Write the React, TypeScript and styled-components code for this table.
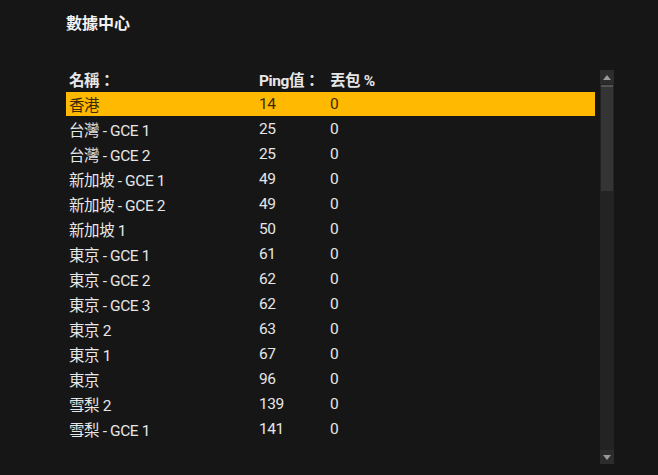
import React from "react";
import styled, { createGlobalStyle } from "styled-components";

const GlobalStyle = createGlobalStyle`
  html, body {
    margin: 0;
    padding: 0;
    background: #161616;
  }
  body {
    font-family: Roboto, "Noto Sans CJK TC", sans-serif;
    color: #e8e8e8;
  }
`;

const Page = styled.div`
  width: 658px;
  height: 475px;
  background: #161616;
  box-sizing: border-box;
  padding: 13px 0 0 66px;
  overflow: hidden;
`;

const Title = styled.h1`
  margin: 0;
  font-size: 16px;
  font-weight: 700;
  line-height: 22px;
  color: #f2f2f2;
`;

const Body = styled.div`
  display: flex;
  margin-top: 33px;
  gap: 5px;
`;

const Table = styled.div`
  width: 529px;
  display: flex;
  flex-direction: column;
`;

const Row = styled.div<{ $active?: boolean; $head?: boolean }>`
  display: grid;
  grid-template-columns: 190px 71px 1fr;
  align-items: center;
  height: ${(p) => (p.$head ? "20px" : "24px")};
  margin-bottom: ${(p) => (p.$head ? "4px" : "1px")};
  padding-left: 3px;
  font-size: 15.5px;
  letter-spacing: -0.4px;
  font-weight: ${(p) => (p.$head ? 700 : 400)};
  background: ${(p) => (p.$active ? "#ffb900" : "transparent")};
  color: ${(p) => (p.$active ? "#3b2c05" : "#e6e6e6")};
`;

const Scrollbar = styled.div`
  width: 14px;
  height: 394px;
  background: #232323;
  display: flex;
  flex-direction: column;
  margin-top: 2px;
`;

const Arrow = styled.div`
  height: 14px;
  background: #2c2c2c;
  display: flex;
  align-items: center;
  justify-content: center;
`;

const Thumb = styled.div`
  height: 104px;
  margin: 1px 1px 0;
  background: #343434;
  border-top: 2px solid #555;
`;

const Spacer = styled.div`
  flex: 1;
`;

const rows = [
  ["香港", "14", "0"],
  ["台灣 - GCE 1", "25", "0"],
  ["台灣 - GCE 2", "25", "0"],
  ["新加坡 - GCE 1", "49", "0"],
  ["新加坡 - GCE 2", "49", "0"],
  ["新加坡 1", "50", "0"],
  ["東京 - GCE 1", "61", "0"],
  ["東京 - GCE 2", "62", "0"],
  ["東京 - GCE 3", "62", "0"],
  ["東京 2", "63", "0"],
  ["東京 1", "67", "0"],
  ["東京", "96", "0"],
  ["雪梨 2", "139", "0"],
  ["雪梨 - GCE 1", "141", "0"],
];

const Tri = ({ up }: { up?: boolean }) => (
  <svg width="8" height="5" viewBox="0 0 8 5">
    <path d={up ? "M0 5 L4 0 L8 5 Z" : "M0 0 L4 5 L8 0 Z"} fill="#9a9a9a" />
  </svg>
);

export default function App() {
  return (
    <Page>
      <GlobalStyle />
      <Title>數據中心</Title>
      <Body>
        <Table>
          <Row $head>
            <span>名稱：</span>
            <span>Ping值：</span>
            <span>丟包 %</span>
          </Row>
          {rows.map((r, i) => (
            <Row key={r[0]} $active={i === 0}>
              <span>{r[0]}</span>
              <span>{r[1]}</span>
              <span>{r[2]}</span>
            </Row>
          ))}
        </Table>
        <Scrollbar>
          <Arrow>
            <Tri up />
          </Arrow>
          <Thumb />
          <Spacer />
          <Arrow>
            <Tri />
          </Arrow>
        </Scrollbar>
      </Body>
    </Page>
  );
}
